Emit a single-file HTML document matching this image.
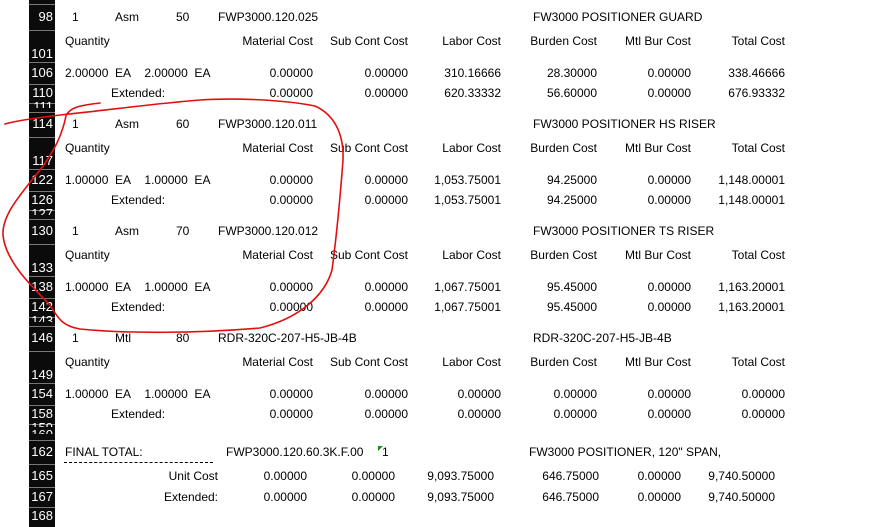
<!DOCTYPE html>
<html><head><meta charset="utf-8"><style>
body{margin:0;width:871px;height:527px;background:#fff;position:relative;overflow:hidden;font-family:"Liberation Sans",Arial,sans-serif;font-size:12px;color:#000}
div{position:absolute;line-height:14px;white-space:nowrap}
.hd{left:29px;top:0;width:26px;height:527px;background:#0b0b0b}
.n{color:#fff;font-size:13px;right:818px;text-align:right}
.g{left:29px;width:26px;height:1px;background:#777}
.r{text-align:right}
</style></head><body>
<div class="hd"></div>
<div class="g" style="top:4px"></div><div class="g" style="top:30px"></div><div class="g" style="top:62px"></div><div class="g" style="top:84px"></div><div class="g" style="top:103px"></div><div class="g" style="top:112px"></div><div class="g" style="top:137px"></div><div class="g" style="top:169px"></div><div class="g" style="top:191px"></div><div class="g" style="top:210px"></div><div class="g" style="top:219px"></div><div class="g" style="top:244px"></div><div class="g" style="top:276px"></div><div class="g" style="top:298px"></div><div class="g" style="top:317px"></div><div class="g" style="top:326px"></div><div class="g" style="top:351px"></div><div class="g" style="top:383px"></div><div class="g" style="top:405px"></div><div class="g" style="top:424px"></div><div class="g" style="top:440px"></div><div class="g" style="top:464px"></div><div class="g" style="top:487px"></div><div class="g" style="top:507px"></div>
<div class="n" style="top:10px">98</div><div class="n" style="top:47px">101</div><div class="n" style="top:66px">106</div><div class="n" style="top:86px">110</div><div class="n" style="top:100px;height:8px;overflow:hidden">111</div>
<div class="n" style="top:117px">114</div><div class="n" style="top:154px">117</div><div class="n" style="top:173px">122</div><div class="n" style="top:193px">126</div><div class="n" style="top:207px;height:8px;overflow:hidden">127</div>
<div class="n" style="top:224px">130</div><div class="n" style="top:261px">133</div><div class="n" style="top:280px">138</div><div class="n" style="top:300px">142</div><div class="n" style="top:314px;height:8px;overflow:hidden">143</div>
<div class="n" style="top:331px">146</div><div class="n" style="top:368px">149</div><div class="n" style="top:387px">154</div><div class="n" style="top:407px">158</div><div class="n" style="top:421px;height:6px;overflow:hidden">159</div><div class="n" style="top:428px;height:6px;overflow:hidden">160</div>
<div class="n" style="top:445px">162</div><div class="n" style="top:469px">165</div><div class="n" style="top:490px">167</div><div class="n" style="top:509px">168</div>

<!-- block 98 -->
<div style="left:72px;top:10px">1</div><div style="left:115px;top:10px">Asm</div><div style="left:176px;top:10px">50</div><div style="left:218px;top:10px">FWP3000.120.025</div><div style="left:533px;top:10px">FW3000 POSITIONER GUARD</div>
<div style="left:65px;top:34px">Quantity</div><div class="r" style="right:558px;top:34px">Material Cost</div><div class="r" style="right:463px;top:34px">Sub Cont Cost</div><div class="r" style="right:370px;top:34px">Labor Cost</div><div class="r" style="right:274px;top:34px">Burden Cost</div><div class="r" style="right:180px;top:34px">Mtl Bur Cost</div><div class="r" style="right:86px;top:34px">Total Cost</div>
<div style="left:65px;top:66px">2.00000&nbsp;&nbsp;EA&nbsp;&nbsp;&nbsp;&nbsp;2.00000&nbsp;&nbsp;EA</div><div class="r" style="right:558px;top:66px">0.00000</div><div class="r" style="right:463px;top:66px">0.00000</div><div class="r" style="right:370px;top:66px">310.16666</div><div class="r" style="right:274px;top:66px">28.30000</div><div class="r" style="right:180px;top:66px">0.00000</div><div class="r" style="right:86px;top:66px">338.46666</div>
<div style="left:111px;top:86px">Extended:</div><div class="r" style="right:558px;top:86px">0.00000</div><div class="r" style="right:463px;top:86px">0.00000</div><div class="r" style="right:370px;top:86px">620.33332</div><div class="r" style="right:274px;top:86px">56.60000</div><div class="r" style="right:180px;top:86px">0.00000</div><div class="r" style="right:86px;top:86px">676.93332</div>

<!-- block 114 -->
<div style="left:72px;top:117px">1</div><div style="left:115px;top:117px">Asm</div><div style="left:176px;top:117px">60</div><div style="left:218px;top:117px">FWP3000.120.011</div><div style="left:533px;top:117px">FW3000 POSITIONER HS RISER</div>
<div style="left:65px;top:141px">Quantity</div><div class="r" style="right:558px;top:141px">Material Cost</div><div class="r" style="right:463px;top:141px">Sub Cont Cost</div><div class="r" style="right:370px;top:141px">Labor Cost</div><div class="r" style="right:274px;top:141px">Burden Cost</div><div class="r" style="right:180px;top:141px">Mtl Bur Cost</div><div class="r" style="right:86px;top:141px">Total Cost</div>
<div style="left:65px;top:173px">1.00000&nbsp;&nbsp;EA&nbsp;&nbsp;&nbsp;&nbsp;1.00000&nbsp;&nbsp;EA</div><div class="r" style="right:558px;top:173px">0.00000</div><div class="r" style="right:463px;top:173px">0.00000</div><div class="r" style="right:370px;top:173px">1,053.75001</div><div class="r" style="right:274px;top:173px">94.25000</div><div class="r" style="right:180px;top:173px">0.00000</div><div class="r" style="right:86px;top:173px">1,148.00001</div>
<div style="left:111px;top:193px">Extended:</div><div class="r" style="right:558px;top:193px">0.00000</div><div class="r" style="right:463px;top:193px">0.00000</div><div class="r" style="right:370px;top:193px">1,053.75001</div><div class="r" style="right:274px;top:193px">94.25000</div><div class="r" style="right:180px;top:193px">0.00000</div><div class="r" style="right:86px;top:193px">1,148.00001</div>

<!-- block 130 -->
<div style="left:72px;top:224px">1</div><div style="left:115px;top:224px">Asm</div><div style="left:176px;top:224px">70</div><div style="left:218px;top:224px">FWP3000.120.012</div><div style="left:533px;top:224px">FW3000 POSITIONER TS RISER</div>
<div style="left:65px;top:248px">Quantity</div><div class="r" style="right:558px;top:248px">Material Cost</div><div class="r" style="right:463px;top:248px">Sub Cont Cost</div><div class="r" style="right:370px;top:248px">Labor Cost</div><div class="r" style="right:274px;top:248px">Burden Cost</div><div class="r" style="right:180px;top:248px">Mtl Bur Cost</div><div class="r" style="right:86px;top:248px">Total Cost</div>
<div style="left:65px;top:280px">1.00000&nbsp;&nbsp;EA&nbsp;&nbsp;&nbsp;&nbsp;1.00000&nbsp;&nbsp;EA</div><div class="r" style="right:558px;top:280px">0.00000</div><div class="r" style="right:463px;top:280px">0.00000</div><div class="r" style="right:370px;top:280px">1,067.75001</div><div class="r" style="right:274px;top:280px">95.45000</div><div class="r" style="right:180px;top:280px">0.00000</div><div class="r" style="right:86px;top:280px">1,163.20001</div>
<div style="left:111px;top:300px">Extended:</div><div class="r" style="right:558px;top:300px">0.00000</div><div class="r" style="right:463px;top:300px">0.00000</div><div class="r" style="right:370px;top:300px">1,067.75001</div><div class="r" style="right:274px;top:300px">95.45000</div><div class="r" style="right:180px;top:300px">0.00000</div><div class="r" style="right:86px;top:300px">1,163.20001</div>

<!-- block 146 -->
<div style="left:72px;top:331px">1</div><div style="left:115px;top:331px">Mtl</div><div style="left:176px;top:331px">80</div><div style="left:218px;top:331px">RDR-320C-207-H5-JB-4B</div><div style="left:533px;top:331px">RDR-320C-207-H5-JB-4B</div>
<div style="left:65px;top:355px">Quantity</div><div class="r" style="right:558px;top:355px">Material Cost</div><div class="r" style="right:463px;top:355px">Sub Cont Cost</div><div class="r" style="right:370px;top:355px">Labor Cost</div><div class="r" style="right:274px;top:355px">Burden Cost</div><div class="r" style="right:180px;top:355px">Mtl Bur Cost</div><div class="r" style="right:86px;top:355px">Total Cost</div>
<div style="left:65px;top:387px">1.00000&nbsp;&nbsp;EA&nbsp;&nbsp;&nbsp;&nbsp;1.00000&nbsp;&nbsp;EA</div><div class="r" style="right:558px;top:387px">0.00000</div><div class="r" style="right:463px;top:387px">0.00000</div><div class="r" style="right:370px;top:387px">0.00000</div><div class="r" style="right:274px;top:387px">0.00000</div><div class="r" style="right:180px;top:387px">0.00000</div><div class="r" style="right:86px;top:387px">0.00000</div>
<div style="left:111px;top:407px">Extended:</div><div class="r" style="right:558px;top:407px">0.00000</div><div class="r" style="right:463px;top:407px">0.00000</div><div class="r" style="right:370px;top:407px">0.00000</div><div class="r" style="right:274px;top:407px">0.00000</div><div class="r" style="right:180px;top:407px">0.00000</div><div class="r" style="right:86px;top:407px">0.00000</div>

<!-- final -->
<div style="left:65px;top:445px">FINAL TOTAL:</div><div style="left:64px;top:462px;width:149px;height:0;border-top:1px dashed #000"></div>
<div style="left:226px;top:445px">FWP3000.120.60.3K.F.00</div><div style="left:382px;top:445px">1</div>
<div style="left:378px;top:446px;width:0;height:0;border-top:5px solid #1a8a1a;border-right:5px solid transparent"></div>
<div style="left:529px;top:445px">FW3000 POSITIONER, 120" SPAN,</div>
<div class="r" style="right:653px;top:469px">Unit Cost</div><div class="r" style="right:564px;top:469px">0.00000</div><div class="r" style="right:476px;top:469px">0.00000</div><div class="r" style="right:377px;top:469px">9,093.75000</div><div class="r" style="right:272px;top:469px">646.75000</div><div class="r" style="right:190px;top:469px">0.00000</div><div class="r" style="right:96px;top:469px">9,740.50000</div>
<div class="r" style="right:653px;top:490px">Extended:</div><div class="r" style="right:564px;top:490px">0.00000</div><div class="r" style="right:476px;top:490px">0.00000</div><div class="r" style="right:377px;top:490px">9,093.75000</div><div class="r" style="right:272px;top:490px">646.75000</div><div class="r" style="right:190px;top:490px">0.00000</div><div class="r" style="right:96px;top:490px">9,740.50000</div>

<svg style="position:absolute;left:0;top:0" width="871" height="527"><path d="M100,103 C85,105 70,106 66,116 C62,135 55,150 40,170 C20,195 2,215 3,235 C5,260 30,285 50,305 C58,318 62,326 80,329 C130,334 200,333 260,328 C300,318 325,295 332,270 C336,240 340,200 343,160 C344,135 335,115 315,106 C280,99 230,98 200,100 C150,104 110,110 60,115 C35,118 15,121 5,124" fill="none" stroke="#e01010" stroke-width="1.6" stroke-linecap="round"/></svg>
</body></html>
